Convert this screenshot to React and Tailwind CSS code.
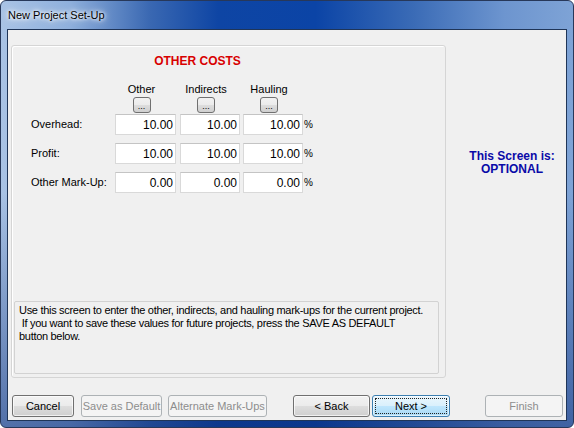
const rows = [
  { label: 'Overhead:', values: ['10.00', '10.00', '10.00'] },
  { label: 'Profit:', values: ['10.00', '10.00', '10.00'] },
  { label: 'Other Mark-Up:', values: ['0.00', '0.00', '0.00'] },
];

const headers = ['Other', 'Indirects', 'Hauling'];
const colWidths = ['w-[61px]', 'w-[60px]', 'w-[60px]'];

function Button({ children, width, disabled, primary }) {
  if (disabled) {
    return (
      <div className={`${width} h-[22px] flex items-center justify-center rounded-[3px] border border-[#adb2b5] bg-[#f4f4f4] text-[#8d8d8d]`}>
        {children}
      </div>
    );
  }
  if (primary) {
    return (
      <div className={`${width} h-[22px] p-[2px] rounded-[3px] border border-[#3c7fb1] bg-[linear-gradient(to_bottom,#eaf6fd_0%,#d9f0fc_50%,#bee6fd_52%,#a7d9f5_100%)] shadow-[inset_0_0_0_1px_rgba(255,255,255,0.6)]`}>
        <div className="w-full h-full flex items-center justify-center border border-dotted border-[#222]">
          {children}
        </div>
      </div>
    );
  }
  return (
    <div className={`${width} h-[22px] flex items-center justify-center rounded-[3px] border border-[#707070] bg-[linear-gradient(to_bottom,#f2f2f2_0%,#ebebeb_50%,#dddddd_52%,#cfcfcf_100%)] shadow-[inset_0_0_0_1px_rgba(255,255,255,0.7)] text-black`}>
      {children}
    </div>
  );
}

function DotsButton() {
  return (
    <div className="w-[18px] h-[16px] flex items-end justify-center rounded-[3px] border border-[#707070] bg-[linear-gradient(to_bottom,#f2f2f2_0%,#ebebeb_50%,#dddddd_52%,#cfcfcf_100%)] text-[9px] leading-[10px] text-black pb-[1px]">
      ...
    </div>
  );
}

export default function App() {
  return (
    <div className="w-[574px] h-[428px] bg-white font-['Liberation_Sans',Arial,sans-serif] text-[11px] text-black">
      <div className="w-full h-full rounded-[6px] border border-[#27385a] flex flex-col bg-[linear-gradient(to_bottom,rgba(0,0,0,0)_45%,rgba(12,45,120,0.55)_100%),linear-gradient(to_right,#a9c3e5_0%,#8fb0dc_12%,#3a68b2_26%,#0e45a4_38%,#0b44a6_55%,#3a6bb6_72%,#6d95cf_88%,#7ea3d6_100%)] overflow-hidden">
        <div className="h-[28px] flex items-center pl-[7px] shrink-0">
          <span className="text-[11px] text-black [text-shadow:0_0_8px_#ffffff,0_0_5px_#ffffff,0_0_3px_#e8f0fb]">New Project Set-Up</span>
        </div>

        <div className="flex-1 mx-[6px] mb-[6px] border border-[#1f3558] bg-[#f0f0f0] flex flex-col">
          <div className="flex pt-[15px] pl-[3px]">
            <div className="w-[435px] h-[333px] border border-[#d5d5d5] rounded-[3px] flex flex-col shadow-[inset_1px_1px_0_#ffffff]">
              <div className="text-center pr-[62px] pt-[8px] text-[12px] leading-[14px] font-bold text-[#d80000]">
                OTHER COSTS
              </div>

              <div className="flex pl-[103px] mt-[15px]">
                {headers.map((h, i) => (
                  <div key={h} className={`${colWidths[i]} ${i < 2 ? (i === 0 ? 'mr-[4px]' : 'mr-[3px]') : ''} flex flex-col items-center pr-[8px]`}>
                    <span className="leading-[13px]">{h}</span>
                    <div className="mt-[1px]">
                      <DotsButton />
                    </div>
                  </div>
                ))}
              </div>

              <div className="flex flex-col gap-[8px] mt-[1px] pl-[19px]">
                {rows.map((r) => (
                  <div key={r.label} className="flex items-center h-[21px]">
                    <span className="w-[84px]">{r.label}</span>
                    {r.values.map((v, i) => (
                      <div
                        key={i}
                        className={`${colWidths[i]} ${i === 0 ? 'mr-[4px]' : i === 1 ? 'mr-[3px]' : ''} h-[21px] bg-white border border-[#d9d9d9] border-t-[#c4c4c4] flex items-center justify-end pr-[2px] text-[12px]`}
                      >
                        {v}
                      </div>
                    ))}
                    <span className="ml-[1px] text-[10px]">%</span>
                  </div>
                ))}
              </div>

              <div className="flex-1" />

              <div className="ml-[2px] mr-[6px] mb-[3px] h-[73px] border border-[#d2d2d2] rounded-[2px] px-[4px] pt-[2px] leading-[13px] text-[11px] tracking-[-0.3px] whitespace-nowrap">
                Use this screen to enter the other, indirects, and hauling mark-ups for the current project.
                <br />
                &nbsp;If you want to save these values for future projects, press the SAVE AS DEFAULT
                <br />
                button below.
              </div>
            </div>

            <div className="flex-1 flex flex-col items-center pl-[12px] pt-[105px] text-[12px] leading-[13px] font-bold text-[#0a0aa8]">
              <span>This Screen is:</span>
              <span>OPTIONAL</span>
            </div>
          </div>

          <div className="flex-1" />

          <div className="flex items-center pl-[4px] pb-[3px] text-[11px]">
            <Button width="w-[62px]">Cancel</Button>
            <div className="ml-[7px]">
              <Button width="w-[81px]" disabled>Save as Default</Button>
            </div>
            <div className="ml-[6px]">
              <Button width="w-[99px]" disabled>Alternate Mark-Ups</Button>
            </div>
            <div className="ml-[26px]">
              <Button width="w-[77px]">&lt; Back</Button>
            </div>
            <div className="ml-[2px]">
              <Button width="w-[78px]" primary>Next &gt;</Button>
            </div>
            <div className="ml-[35px]">
              <Button width="w-[78px]" disabled>Finish</Button>
            </div>
          </div>
        </div>
      </div>
    </div>
  );
}
